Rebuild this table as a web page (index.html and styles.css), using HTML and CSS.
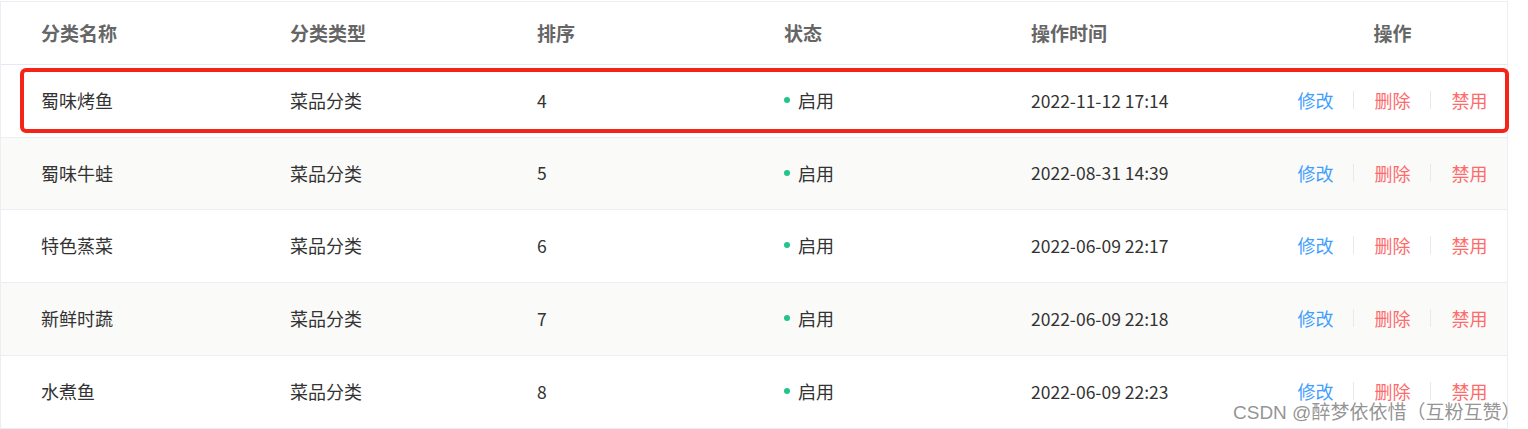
FILE: index.html
```html
<!DOCTYPE html>
<html lang="zh-CN">
<head>
<meta charset="utf-8">
<title>分类管理</title>
<link rel="stylesheet" href="styles.css">
</head>
<body>
<div class="page">
  <div class="table">
    <div class="row head">
      <div class="cell">分类名称</div>
      <div class="cell">分类类型</div>
      <div class="cell">排序</div>
      <div class="cell">状态</div>
      <div class="cell">操作时间</div>
      <div class="cell center">操作</div>
    </div>
    <div class="row">
      <div class="cell">蜀味烤鱼</div>
      <div class="cell">菜品分类</div>
      <div class="cell num">4</div>
      <div class="cell"><span class="dot"></span>启用</div>
      <div class="cell num">2022-11-12 17:14</div>
      <div class="cell center actions"><a class="link edit">修改</a><i class="sep"></i><a class="link del">删除</a><i class="sep"></i><a class="link del">禁用</a></div>
    </div>
    <div class="row stripe short">
      <div class="cell">蜀味牛蛙</div>
      <div class="cell">菜品分类</div>
      <div class="cell num">5</div>
      <div class="cell"><span class="dot"></span>启用</div>
      <div class="cell num">2022-08-31 14:39</div>
      <div class="cell center actions"><a class="link edit">修改</a><i class="sep"></i><a class="link del">删除</a><i class="sep"></i><a class="link del">禁用</a></div>
    </div>
    <div class="row">
      <div class="cell">特色蒸菜</div>
      <div class="cell">菜品分类</div>
      <div class="cell num">6</div>
      <div class="cell"><span class="dot"></span>启用</div>
      <div class="cell num">2022-06-09 22:17</div>
      <div class="cell center actions"><a class="link edit">修改</a><i class="sep"></i><a class="link del">删除</a><i class="sep"></i><a class="link del">禁用</a></div>
    </div>
    <div class="row stripe">
      <div class="cell">新鲜时蔬</div>
      <div class="cell">菜品分类</div>
      <div class="cell num">7</div>
      <div class="cell"><span class="dot"></span>启用</div>
      <div class="cell num">2022-06-09 22:18</div>
      <div class="cell center actions"><a class="link edit">修改</a><i class="sep"></i><a class="link del">删除</a><i class="sep"></i><a class="link del">禁用</a></div>
    </div>
    <div class="row">
      <div class="cell">水煮鱼</div>
      <div class="cell">菜品分类</div>
      <div class="cell num">8</div>
      <div class="cell"><span class="dot"></span>启用</div>
      <div class="cell num">2022-06-09 22:23</div>
      <div class="cell center actions"><a class="link edit">修改</a><i class="sep"></i><a class="link del">删除</a><i class="sep"></i><a class="link del">禁用</a></div>
    </div>
  </div>
  <div class="highlight"></div>
  <div class="watermark">CSDN @醉梦依依惜（互粉互赞）</div>
</div>
</body>
</html>
```

FILE: styles.css
```css
* { box-sizing: border-box; }
html, body {
  margin: 0;
  padding: 0;
  background: #fff;
}
body {
  font-family: "Noto Sans CJK SC", "Noto Sans", sans-serif;
  color: #333;
}
.page {
  position: relative;
  width: 1528px;
  height: 429px;
  overflow: hidden;
  padding: 1px 0 0 0;
}
.table {
  width: 1508px;
  border: 1px solid #ebeef5;
  border-bottom: none;
}
.row {
  display: grid;
  grid-template-columns: 249px 247px 247px 247px 287px 1fr;
  height: 73px;
  padding-bottom: 2px;
  border-bottom: 1px solid #ebeef5;
  align-items: center;
  font-size: 18px;
}
.row.short { height: 72px; }
.row.head {
  height: 63px;
  border-bottom: 1px solid #e6e9f2;
  font-weight: bold;
  color: #666;
  font-size: 19px;
}
.row.stripe { background: #fafaf9; }
.cell {
  padding-left: 40px;
  display: flex;
  align-items: center;
  white-space: nowrap;
}
.cell.num { font-size: 17.5px; }
.cell.center {
  padding-left: 0;
  justify-content: center;
}
.dot {
  width: 6px;
  height: 6px;
  border-radius: 50%;
  background: #22c489;
  margin-right: 8px;
}
.actions { padding-left: 1px; }
.link {
  font-size: 18px;
  cursor: pointer;
}
.link.edit { color: #419eff; }
.link.del { color: #fd6b6b; }
.sep {
  display: inline-block;
  width: 1px;
  height: 18px;
  background: #e8e8ee;
  margin: 0 21px 0 19px;
}
.highlight {
  position: absolute;
  left: 20px;
  top: 68px;
  width: 1489px;
  height: 65px;
  border: 4px solid #f52318;
  border-radius: 6px;
}
.watermark {
  position: absolute;
  left: 1233px;
  top: 397px;
  font-size: 19px;
  color: rgba(120, 120, 120, 0.8);
  white-space: nowrap;
  font-family: "Liberation Sans", "Noto Sans CJK SC", sans-serif;
}
```
